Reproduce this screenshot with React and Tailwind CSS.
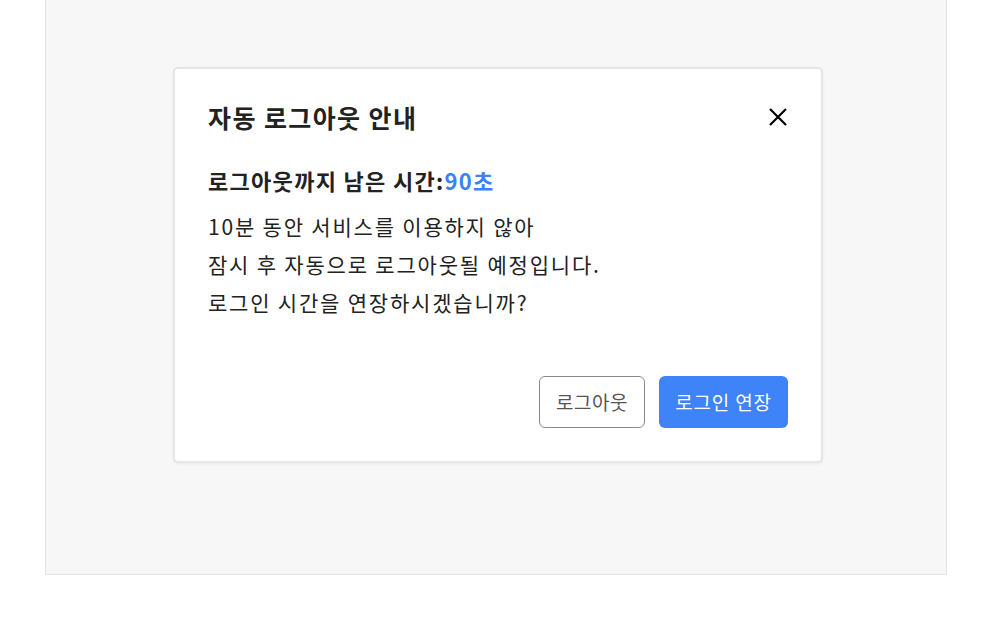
import React from 'react';

const CloseIcon = () => (
    <svg className="h-[20px] w-[20px]" viewBox="0 0 20 20" fill="none" stroke="currentColor" strokeWidth={2.2}>
        <path d="M2 2L18 18M18 2L2 18" />
    </svg>
);

const App = () => {
    return (
        <div className="min-h-screen bg-white font-['Noto_Sans_CJK_KR','Noto_Sans',sans-serif] text-[#222]">
            <div className="ml-[45px] w-[902px] h-[575px] bg-[#f7f7f7] border-l border-r border-b border-[#e3e3e3] pt-[67px]">
                {/* Auto logout dialog */}
                <div className="ml-[127px] w-[650px] bg-white border-2 border-[#e6e6e6] rounded-[5px] shadow-[0_1px_3px_rgba(0,0,0,0.06)] px-[33px] pt-[32px] pb-[33px]">
                    <div className="flex items-center justify-between">
                        <h2 className="text-[25px] leading-[32px] font-bold tracking-[1.4px]">자동 로그아웃 안내</h2>
                        <button className="text-black">
                            <CloseIcon />
                        </button>
                    </div>

                    <p className="mt-[33px] text-[22px] leading-[28px] font-bold tracking-[1.3px]">
                        로그아웃까지 남은 시간:<span className="text-[#3b82f6]">90초</span>
                    </p>

                    <div className="mt-[13px] text-[21px] leading-[38px] tracking-[1.8px] text-[#222]">
                        <p>10분 동안 서비스를 이용하지 않아</p>
                        <p>잠시 후 자동으로 로그아웃될 예정입니다.</p>
                        <p>로그인 시간을 연장하시겠습니까?</p>
                    </div>

                    <div className="mt-[55px] flex justify-end gap-[14px]">
                        <button className="h-[52px] w-[106px] rounded-[6px] border border-[#8a8a8a] bg-white text-[19px] tracking-[0.5px] text-[#555]">
                            로그아웃
                        </button>
                        <button className="h-[52px] w-[129px] rounded-[6px] bg-[#3f83f8] text-[19px] tracking-[0.8px] text-white">
                            로그인 연장
                        </button>
                    </div>
                </div>
            </div>
        </div>
    );
};

export default App;
